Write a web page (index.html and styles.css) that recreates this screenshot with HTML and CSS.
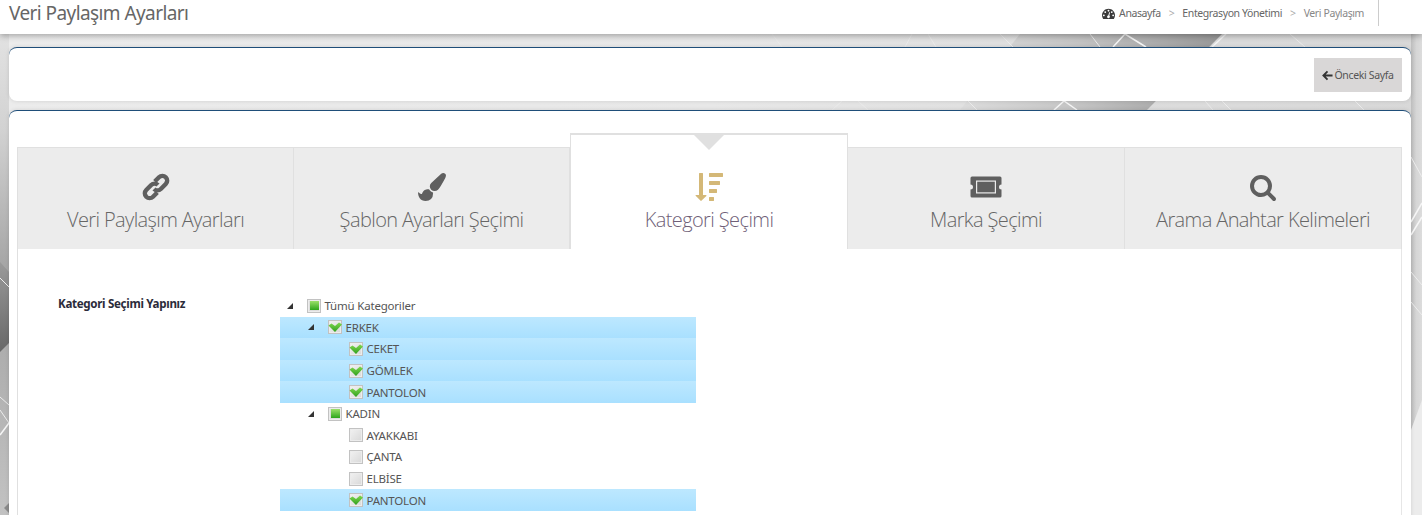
FILE: index.html
```html
<!DOCTYPE html>
<html lang="tr">
<head>
<meta charset="utf-8">
<title>Veri Paylaşım Ayarları</title>
<link rel="stylesheet" href="styles.css">
</head>
<body>
<svg class="bg-art" viewBox="0 0 1422 515" preserveAspectRatio="none" aria-hidden="true">
  <defs>
    <linearGradient id="leftfade" x1="0" y1="0" x2="0" y2="1">
      <stop offset="0" stop-color="#e2e2e2"/>
      <stop offset=".2" stop-color="#d2d2d2"/>
      <stop offset=".48" stop-color="#a6a6a6"/>
      <stop offset=".7" stop-color="#b0b0b0"/>
      <stop offset="1" stop-color="#c2c2c2"/>
    </linearGradient>
    <linearGradient id="leftdark" x1="0" y1="0" x2="0" y2="1">
      <stop offset="0" stop-color="#9a9a9a"/>
      <stop offset="1" stop-color="#686868"/>
    </linearGradient>
    <linearGradient id="topdark" x1="0" y1="0" x2="1" y2="0">
      <stop offset="0" stop-color="#dcdcdc"/>
      <stop offset=".45" stop-color="#c4c4c4"/>
      <stop offset="1" stop-color="#989898"/>
    </linearGradient>
    <linearGradient id="rightfade" x1="0" y1="0" x2="1" y2="0">
      <stop offset="0" stop-color="#bdbdbd"/>
      <stop offset=".5" stop-color="#d6d6d6"/>
      <stop offset="1" stop-color="#dcdcdc"/>
    </linearGradient>
    <linearGradient id="chk" x1="0" y1="0" x2="0" y2="1">
      <stop offset="0" stop-color="#7fd84e"/>
      <stop offset="1" stop-color="#2f9f1e"/>
    </linearGradient>
  </defs>
  <rect x="0" y="34" width="9" height="481" fill="url(#leftfade)"/>
  <polygon points="0,262 9,272 9,343 0,352" fill="url(#leftdark)"/>
  <polyline points="0,278 9,287" class="art-line"/>
  <polyline points="0,397 9,405" class="art-line"/>
  <polyline points="0,410 9,423" class="art-line"/>
  <polyline points="0,435 9,423" class="art-line-strong"/>
  <polygon points="4,508 9,503 9,513" fill="#8a8a8a"/>
  <polygon points="1020,34 1222,34 1147,110 960,110" fill="url(#topdark)"/>
  <rect x="1411" y="34" width="11" height="481" fill="url(#rightfade)"/>
  <polygon points="1411,515 1411,430 1422,400 1422,515" fill="#ececec"/>
  <polyline points="1411,157 1422,177" class="art-line"/>
  <polyline points="1411,222 1422,203" class="art-line-strong"/>
  <polyline points="1411,235 1422,217" class="art-line-strong"/>
  <polyline points="1411,272 1422,285" class="art-line"/>
  <polyline points="1411,302 1422,315" class="art-line"/>
  <polyline points="1113,47 1125,34 1146,47" class="art-line-strong"/>
  <polyline points="905,47 912,34" class="art-line"/>
  <polyline points="928,34 936,47" class="art-line"/>
  <polyline points="1000,34 1013,47" class="art-line"/>
  <polyline points="1090,34 1100,47" class="art-line"/>
  <polyline points="772,34 782,47" class="art-line"/>
  <polyline points="1290,34 1305,47" class="art-line"/>
  <polyline points="1226,34 1212,47" class="art-line-strong"/>
  <polyline points="832,110 842,101" class="art-line"/>
  <polyline points="858,101 868,110" class="art-line"/>
  <polyline points="968,101 977,110" class="art-line"/>
  <polyline points="1054,110 1064,101 1077,110" class="art-line-strong"/>
  <polyline points="1205,101 1213,110" class="art-line"/>
  <polyline points="1222,101 1231,110" class="art-line"/>
  <polyline points="1355,101 1364,110" class="art-line"/>
</svg>
<header class="topbar">
  <h1 class="page-title">Veri Paylaşım Ayarları</h1>
  <nav class="crumbs">
    <svg class="crumb-icon" viewBox="0 0 1792 1792"><path d="M384 1152q0-53-37.500-90.500t-90.500-37.500-90.500 37.500-37.500 90.500 37.500 90.500 90.500 37.500 90.500-37.500 37.500-90.500zm192-448q0-53-37.500-90.500t-90.500-37.500-90.500 37.500-37.500 90.500 37.500 90.500 90.500 37.500 90.500-37.500 37.500-90.500zm428 481l101-382q6-26-7.500-48.500t-38.500-29.500-48 6.500-30 39.500l-101 382q-60 5-107 43.500t-63 98.500q-20 77 20 146t117 89 146-20 89-117q16-60-6-117t-72-91zm660-33q0-53-37.500-90.500t-90.500-37.500-90.500 37.500-37.500 90.500 37.500 90.500 90.500 37.500 90.500-37.500 37.500-90.500zm-640-640q0-53-37.500-90.500t-90.500-37.500-90.500 37.500-37.500 90.500 37.500 90.500 90.500 37.500 90.500-37.500 37.500-90.500zm448 192q0-53-37.500-90.500t-90.500-37.500-90.500 37.500-37.500 90.500 37.500 90.500 90.500 37.500 90.500-37.500 37.500-90.500zm320 448q0 261-141 483-19 29-54 29h-1402q-35 0-54-29-141-221-141-483 0-182 71-348t191-286 286-191 348-71 348 71 286 191 191 286 71 348z"/></svg>
    <span class="crumb">Anasayfa</span><span class="sep">&gt;</span>
    <span class="crumb">Entegrasyon Yönetimi</span><span class="sep">&gt;</span>
    <span class="crumb crumb-last">Veri Paylaşım</span>
  </nav>
</header>
<main class="content">
  <section class="card card-actions">
    <button class="back-btn" type="button">
      <svg class="back-icon" viewBox="0 0 12 12"><path d="M6 1.500 1.500 6 6 10.500M1.800 6H11.500" fill="none" stroke="currentColor" stroke-width="2"/></svg>Önceki Sayfa
    </button>
  </section>
  <section class="card card-main">
    <div class="tabs">
      <div class="tab">
        <svg class="tab-icon tab-icon-link" viewBox="0 0 28 28"><g transform="rotate(-45 14 14)"><path d="M11 18.800H5a4.800 4.800 0 0 1 0-9.600H12a4.800 4.800 0 0 1 4.800 4.800"/><path d="M17 9.200H23a4.800 4.800 0 0 1 0 9.600H16a4.800 4.800 0 0 1-4.800-4.800"/></g></svg>
        <span class="tab-label">Veri Paylaşım Ayarları</span>
      </div>
      <div class="tab">
        <svg class="tab-icon" viewBox="0 0 1792 1792"><path d="M1615 0q70 0 122.500 46.500t52.500 116.500q0 63-45 151-332 629-465 752-97 91-218 91-126 0-216.500-92.500t-90.500-219.500q0-128 92-212l638-579q59-54 130-54zm-909 1034q39 76 106.500 130t150.500 76l1 71q4 213-129.500 347t-348.500 134q-123 0-218-46.500t-152.500-127.500-86.500-183-29-220q7 5 41 30t62 44.500 59 36.500 46 17q41 0 55-37 25-66 57.500-112.500t69.500-76 88-47.500 103-25.500 125-10.500z"/></svg>
        <span class="tab-label">Şablon Ayarları Şeçimi</span>
      </div>
      <div class="tab tab-active">
        <svg class="tab-icon" viewBox="0 0 1792 1792"><path d="M1216 1568v192q0 14-9 23t-23 9h-256q-14 0-23-9t-9-23v-192q0-14 9-23t23-9h256q14 0 23 9t9 23zm-480-128q0 12-10 24l-319 319q-10 9-23 9-12 0-23-9l-320-320q-15-16-7-35 8-20 30-20h192v-1376q0-14 9-23t23-9h192q14 0 23 9t9 23v1376h192q14 0 23 9t9 23zm672-384v192q0 14-9 23t-23 9h-448q-14 0-23-9t-9-23v-192q0-14 9-23t23-9h448q14 0 23 9t9 23zm192-512v192q0 14-9 23t-23 9h-640q-14 0-23-9t-9-23v-192q0-14 9-23t23-9h640q14 0 23 9t9 23zm192-512v192q0 14-9 23t-23 9h-832q-14 0-23-9t-9-23v-192q0-14 9-23t23-9h832q14 0 23 9t9 23z"/></svg>
        <span class="tab-label">Kategori Şeçimi</span>
      </div>
      <div class="tab">
        <svg class="tab-icon tab-icon-wide" viewBox="0 0 32 22"><path fill-rule="evenodd" d="M2 0.500h28a1.500 1.500 0 0 1 1.500 1.500V8.500a2.500 2.500 0 0 0 0 5v6.500a1.500 1.500 0 0 1-1.500 1.500H2a1.500 1.500 0 0 1-1.500-1.500v-6.500a2.500 2.500 0 0 0 0-5V2A1.500 1.500 0 0 1 2 0.500zM6 4.500v13h20v-13z"/><path d="M7.200 5.700h17.600v10.600H7.200z"/></svg>
        <span class="tab-label">Marka Şeçimi</span>
      </div>
      <div class="tab">
        <svg class="tab-icon" viewBox="0 0 1792 1792"><path d="M1216 832q0-185-131.500-316.500t-316.500-131.500-316.500 131.500-131.500 316.500 131.500 316.500 316.500 131.500 316.500-131.500 131.500-316.500zm512 832q0 52-38 90t-90 38q-54 0-90-38l-343-342q-179 124-399 124-143 0-273.500-55.500t-225-150-150-225-55.500-273.500 55.500-273.500 150-225 225-150 273.500-55.500 273.500 55.500 225 150 150 225 55.500 273.500q0 220-124 399l343 343q37 37 37 90z"/></svg>
        <span class="tab-label">Arama Anahtar Kelimeleri</span>
      </div>
    </div>
    <div class="panel">
      <div class="field-label">Kategori Seçimi Yapınız</div>
      <ul class="tree">
        <li class="node lvl0"><i class="exp"></i><i class="cb part"></i><span>Tümü Kategoriler</span></li>
        <li class="node lvl1 sel"><i class="exp"></i><i class="cb on"><svg viewBox="0 0 14 14"><path fill="url(#chk)" d="M0.500 5.500 3.500 3.500 7 6 11 2.500 14 4.500 7 12z"/></svg></i><span>ERKEK</span></li>
        <li class="node lvl2 sel"><i class="cb on"><svg viewBox="0 0 14 14"><path fill="url(#chk)" d="M0.500 5.500 3.500 3.500 7 6 11 2.500 14 4.500 7 12z"/></svg></i><span>CEKET</span></li>
        <li class="node lvl2 sel"><i class="cb on"><svg viewBox="0 0 14 14"><path fill="url(#chk)" d="M0.500 5.500 3.500 3.500 7 6 11 2.500 14 4.500 7 12z"/></svg></i><span>GÖMLEK</span></li>
        <li class="node lvl2 sel"><i class="cb on"><svg viewBox="0 0 14 14"><path fill="url(#chk)" d="M0.500 5.500 3.500 3.500 7 6 11 2.500 14 4.500 7 12z"/></svg></i><span>PANTOLON</span></li>
        <li class="node lvl1"><i class="exp"></i><i class="cb part"></i><span>KADIN</span></li>
        <li class="node lvl2"><i class="cb"></i><span>AYAKKABI</span></li>
        <li class="node lvl2"><i class="cb"></i><span>ÇANTA</span></li>
        <li class="node lvl2"><i class="cb"></i><span>ELBİSE</span></li>
        <li class="node lvl2 sel"><i class="cb on"><svg viewBox="0 0 14 14"><path fill="url(#chk)" d="M0.500 5.500 3.500 3.500 7 6 11 2.500 14 4.500 7 12z"/></svg></i><span>PANTOLON</span></li>
      </ul>
    </div>
  </section>
</main>
</body>
</html>
```
FILE: styles.css
```css
* { box-sizing: border-box; }
html, body { margin: 0; height: 515px; overflow: hidden; }
body {
  background: linear-gradient(90deg, #ececec 0, #e8e8e8 50%, #dedede 75%, #d8d8d8 100%);
  font-family: "Noto Sans", "Open Sans", sans-serif;
  color: #444;
}
.bg-art { position: absolute; left: 0; top: 0; width: 1422px; height: 515px; z-index: 0; }
.art-line { fill: none; stroke: #ececec; stroke-width: 1; }
.art-line-strong { fill: none; stroke: #f6f6f6; stroke-width: 1.5; }
.topbar {
  position: relative; z-index: 1;
  height: 34px; background: #fff; box-shadow: 0 2px 6px rgba(0,0,0,.3);
  display: flex; justify-content: space-between; align-items: flex-start;
  padding: 0 43px 0 9px;
}
.page-title { margin: 0; font: 400 19px/26px "Noto Sans", sans-serif; color: #666; letter-spacing: -.58px; }
.crumbs { display: flex; align-items: center; height: 26px; padding-right: 14px; border-right: 1px solid #ccc; font-size: 10.5px; color: #666; letter-spacing: -.4px; }
.crumb-icon { width: 13px; height: 13px; fill: #3a3a3a; margin-right: 4px; }
.sep { color: #aaa; margin: 0 8px; }
.crumb-last { color: #888; }
.content { position: relative; z-index: 1; padding: 13px 11px 0 9px; display: flex; flex-direction: column; gap: 9px; }
.card { background: #fff; border-top: 1px solid #1f4e79; border-radius: 8px; box-shadow: 0 0 4px rgba(0,0,0,.12); }
.card-actions { height: 54px; display: flex; justify-content: flex-end; align-items: flex-start; padding: 10px 9px 0 0; }
.back-btn { width: 88px; height: 34px; border: 0; background: #d9d7d7; color: #555; font: 400 10.5px "Noto Sans", sans-serif; letter-spacing: -.35px; display: flex; align-items: center; justify-content: center; padding: 0; }
.back-icon { width: 11px; height: 11px; margin-right: 1px; color: #333; }
.card-main { height: 420px; padding: 36px 9px 0 8px; }
.tabs { display: grid; grid-template-columns: 276px 276px 278px 277px 1fr; height: 102px; background: #ececec; border: 1px solid #e0e0e0; border-bottom: 0; }
.tab { position: relative; display: flex; flex-direction: column; align-items: center; padding-top: 25px; border-right: 1px solid #e0e0e0; color: #666; }
.tab:last-child { border-right: 0; }
.tab-icon { width: 28px; height: 28px; fill: #5f5f5f; }
.tab-icon-wide { width: 32px; height: 28px; }
.tab-icon-link { fill: none; stroke: #5f5f5f; stroke-width: 4.4; }
.tab-label { font: 300 20px/26px "Open Sans", sans-serif; margin-top: 6px; letter-spacing: -.6px; }
.tab-active { background: #fff; margin: -15px 0 0 0; padding-top: 38px; border-style: solid; border-color: #e0e0e0; border-width: 2px 1px 0; }
.tab-active .tab-icon { fill: #d4b877; }
.tab-active .tab-label { color: #6f5f78; }
.tab-active::before {
  content: ""; position: absolute; left: 50%; top: -2px; margin-left: -17px;
  border: 17px solid transparent; border-bottom: 0; border-top-color: #e0e0e0;
}
.panel { height: 270px; border-left: 1px solid #e0e0e0; border-right: 1px solid #e6e6e6; display: flex; padding: 46px 0 0 40px; }
.field-label { width: 222px; font-size: 11.6px; font-weight: 700; color: #2b2b3a; letter-spacing: -.32px; line-height: 18px; }
.tree { list-style: none; margin: 0; padding: 0; width: 416px; }
.node { height: 21.6px; display: flex; align-items: center; font-size: 11.5px; color: #555; letter-spacing: -.2px; }
.node.sel { background: linear-gradient(#bde8ff, #a9e0ff); }
.lvl0 { padding-left: 7px; }
.lvl1 { padding-left: 28px; }
.lvl2 { padding-left: 69px; }
.exp { width: 0; height: 0; border-style: solid; border-width: 0 0 6px 6px; border-color: transparent transparent #333 transparent; margin-right: 14px; }
.cb { position: relative; width: 14px; height: 14px; border: 1px solid #c2c2c2; box-shadow: inset 0 0 0 1px #ececec; background: linear-gradient(135deg, #f2f2f2, #d8d8d8); margin-right: 3.5px; flex: none; }
.cb.part { background: #ddd; }
.cb.part::after { content: ""; position: absolute; left: 1.5px; top: 1.5px; right: 1.5px; bottom: 1.5px; background: linear-gradient(#9be06a, #2ea61c); }
.cb.on svg { position: absolute; left: -1px; top: -1px; width: 14px; height: 14px; }
```
